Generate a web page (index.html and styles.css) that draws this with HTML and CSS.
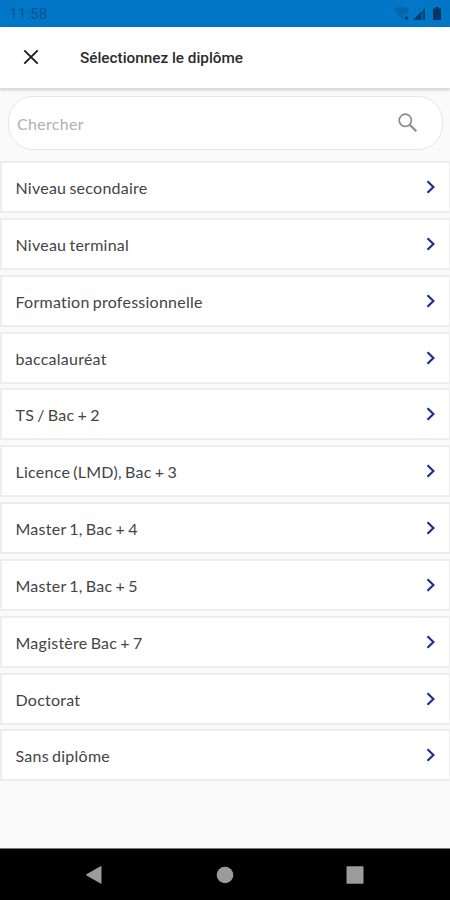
FILE: index.html
```
<!DOCTYPE html>
<html lang="fr">
<head>
    <meta charset="UTF-8">
    <meta name="viewport" content="width=device-width, initial-scale=1.0">
    <title>Sélectionnez le diplôme</title>
    <link rel="stylesheet" href="styles.css">
</head>
<body>
    <!-- Status bar -->
    <div class="status-bar">
        <span class="time">11:58</span>
        <svg class="status-icons" width="50" height="16" viewBox="0 0 50 16">
            <path d="M1 3.500C5.500 .3 12 .3 16.500 3.500L13 8.500H10V12L9 13Z" fill="#0566a9"/>
            <circle cx="13.500" cy="12" r="1.800" fill="#073d6b"/>
            <path d="M20 14L32 2V14Z" fill="#075c9b"/>
            <path d="M20 14L28 6V14ZM30.500 3.500L32 2V14H30.500Z" fill="#073d6b"/>
            <path d="M42.500 1H45.500V2.500H47.500Q48 2.500 48 3V13.500Q48 14 47.500 14H40.500Q40 14 40 13.500V3Q40 2.500 40.500 2.500H42.500Z" fill="#073764"/>
        </svg>
    </div>

    <!-- Title bar -->
    <header class="app-bar">
        <button class="close-button" aria-label="Fermer">
            <svg width="16" height="16" viewBox="0 0 16 16">
                <path d="M1.300 1.300L14.700 14.700M14.700 1.300L1.300 14.700" stroke="#1c1c1c" stroke-width="1.900"/>
            </svg>
        </button>
        <h1>Sélectionnez le diplôme</h1>
    </header>

    <main>
        <div class="search-box">
            <input type="text" placeholder="Chercher">
            <svg width="20" height="20" viewBox="0 0 20 20" fill="none" stroke="#8c8c8c">
                <circle cx="7.300" cy="7.300" r="6.100" stroke-width="1.700"/>
                <path d="M11.800 11.800L18.300 18.300" stroke-width="2.200"/>
            </svg>
        </div>

        <ul class="diploma-list" id="diplomaList"></ul>
    </main>

    <!-- Navigation bar -->
    <nav class="nav-bar">
        <svg width="18" height="20" viewBox="0 0 18 20"><path d="M1.500 9.200L15.500 1.200Q16.500 .8 16.500 1.700V18Q16.500 19 15.500 18.500L1.500 10.500Q.5 9.800 1.500 9.200Z" fill="#9b9b9b"/></svg>
        <svg width="18" height="18" viewBox="0 0 18 18"><circle cx="9" cy="9" r="8.300" fill="#9b9b9b"/></svg>
        <svg width="18" height="18" viewBox="0 0 18 18"><rect x=".5" y=".3" width="17" height="17.400" rx="1" fill="#9b9b9b"/></svg>
    </nav>

    <script>
        const diplomas = [
            'Niveau secondaire',
            'Niveau terminal',
            'Formation professionnelle',
            'baccalauréat',
            'TS / Bac + 2',
            'Licence (LMD), Bac + 3',
            'Master 1, Bac + 4',
            'Master 1, Bac + 5',
            'Magistère Bac + 7',
            'Doctorat',
            'Sans diplôme'
        ];
        const diplomaList = document.getElementById('diplomaList');

        diplomas.forEach(diploma => {
            const item = document.createElement('li');
            item.innerHTML = `
                <span>${diploma}</span>
                <svg width="10" height="14" viewBox="0 0 10 14">
                    <path d="M1.500 1.200L7.400 7L1.500 12.800" fill="none" stroke="#1a2f9c" stroke-width="2.200"/>
                </svg>
            `;
            diplomaList.appendChild(item);
        });
    </script>
</body>
</html>
```

FILE: styles.css
```
* {
    box-sizing: border-box;
}

body {
    display: flex;
    flex-direction: column;
    height: 900px;
    margin: 0;
    overflow: hidden;
    background-color: #fafafa;
    font-family: Lato, sans-serif;
    color: #444444;
}

.status-bar {
    display: flex;
    justify-content: space-between;
    align-items: center;
    height: 27px;
    padding: 1px 7px 0 9px;
    background-color: #0277c8;
}

.time {
    font-family: Roboto, sans-serif;
    font-size: 15.4px;
    color: #07548f;
}

.app-bar {
    display: flex;
    align-items: center;
    height: 62px;
    padding: 0 0 1px 23px;
    background-color: #ffffff;
    border-bottom: 1px solid #dedede;
    box-shadow: 0 1px 3px rgba(0, 0, 0, 0.2);
}

.close-button {
    display: flex;
    padding: 0;
    border: none;
    background: none;
}

h1 {
    margin: 1px 0 0 41px;
    font-family: Roboto, sans-serif;
    font-size: 15.3px;
    font-weight: 500;
    color: #2c2c2c;
}

main {
    flex: 1;
    padding-top: 7px;
}

.search-box {
    display: flex;
    align-items: center;
    justify-content: space-between;
    height: 54px;
    margin: 0 7px 0 8px;
    padding: 0 24px 0 8px;
    background-color: #ffffff;
    border: 1px solid #e6e6e6;
    border-radius: 25px;
}

.search-box input {
    width: 300px;
    padding: 1px 0 0;
    border: none;
    outline: none;
    font-family: Lato, sans-serif;
    font-size: 16px;
    letter-spacing: 0.3px;
}

.search-box input::placeholder {
    color: #b0b0b0;
}

.diploma-list {
    display: flex;
    flex-direction: column;
    gap: 4.85px;
    margin: 11px 0 0;
    padding: 0;
    list-style: none;
}

.diploma-list li {
    display: flex;
    align-items: center;
    justify-content: space-between;
    height: 52px;
    padding: 0 13px 0 13.5px;
    background-color: #ffffff;
    border: 2px solid #eeeeee;
    border-right-width: 1px;
    font-size: 16px;
    letter-spacing: 0.25px;
    word-spacing: -1.2px;
}

.diploma-list span {
    padding-top: 1px;
}

.nav-bar {
    display: flex;
    align-items: center;
    justify-content: space-between;
    height: 52px;
    padding: 0 86px 0 85px;
    background-color: #000000;
    border-top: 1px solid #777777;
}
```
